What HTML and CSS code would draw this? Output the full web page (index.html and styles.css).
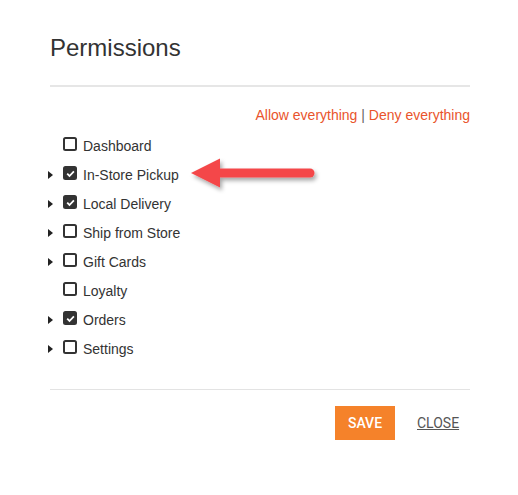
FILE: index.html
```html
<!DOCTYPE html>
<html>
<head>
<meta charset="utf-8">
<link rel="stylesheet" href="styles.css">
</head>
<body>
<div class="modal">
  <h1 class="title">Permissions</h1>
  <hr class="rule-top">
  <div class="bulk"><a class="lnk">Allow everything</a> <span class="sep">|</span> <a class="lnk">Deny everything</a></div>
  <ul class="perms">
    <li class="row"><span class="caret none"></span><span class="box"></span><span class="lbl">Dashboard</span></li>
    <li class="row"><span class="caret"></span><span class="box on"><svg viewBox="0 0 13 13" width="13" height="13"><path d="M3.2 6.7 L5.5 9 L9.9 4.4" fill="none" stroke="#fff" stroke-width="1.8"/></svg></span><span class="lbl">In-Store Pickup</span></li>
    <li class="row"><span class="caret"></span><span class="box on"><svg viewBox="0 0 13 13" width="13" height="13"><path d="M3.2 6.7 L5.5 9 L9.9 4.4" fill="none" stroke="#fff" stroke-width="1.8"/></svg></span><span class="lbl">Local Delivery</span></li>
    <li class="row"><span class="caret"></span><span class="box"></span><span class="lbl">Ship from Store</span></li>
    <li class="row"><span class="caret"></span><span class="box"></span><span class="lbl">Gift Cards</span></li>
    <li class="row"><span class="caret none"></span><span class="box"></span><span class="lbl">Loyalty</span></li>
    <li class="row"><span class="caret"></span><span class="box on"><svg viewBox="0 0 13 13" width="13" height="13"><path d="M3.2 6.7 L5.5 9 L9.9 4.4" fill="none" stroke="#fff" stroke-width="1.8"/></svg></span><span class="lbl">Orders</span></li>
    <li class="row"><span class="caret"></span><span class="box"></span><span class="lbl">Settings</span></li>
  </ul>
  <hr class="rule-bottom">
  <div class="actions">
    <button class="save">SAVE</button>
    <a class="close">CLOSE</a>
  </div>
  <svg class="arrow" width="140" height="50" viewBox="0 0 140 50">
    <defs>
      <filter id="sh" x="-20%" y="-50%" width="140%" height="200%">
        <feDropShadow dx="2" dy="3" stdDeviation="2" flood-color="#000" flood-opacity="0.35"/>
      </filter>
    </defs>
    <g filter="url(#sh)">
      <path d="M35 19.5 L125 19.5 A4.5 4.5 0 0 1 125 28.5 L35 28.5 Z" fill="#f4474a"/>
      <path d="M6 24 L35 9.5 L35 38.5 Z" fill="#f4474a"/>
    </g>
  </svg>
</div>
</body>
</html>
```

FILE: styles.css
```css
html, body {
  margin: 0;
  padding: 0;
  background: #fff;
}
body {
  font-family: "Liberation Sans", Arial, sans-serif;
  color: #333;
  width: 518px;
  height: 495px;
  overflow: hidden;
}
.modal {
  position: relative;
  width: 420px;
  margin-left: 50px;
  padding-top: 34px;
}
.title {
  margin: 0;
  font-size: 24px;
  line-height: 28px;
  font-weight: normal;
  color: #333;
}
.rule-top {
  margin: 23px 0 0 0;
  border: 0;
  height: 2px;
  background: #e6e6e6;
}
.bulk {
  margin-top: 20px;
  text-align: right;
  font-size: 14px;
  line-height: 16px;
}
.lnk {
  color: #e9542c;
  cursor: pointer;
}
.sep {
  color: #666;
}
.perms {
  list-style: none;
  margin: 8px 0 0 0;
  padding: 0;
}
.row {
  display: flex;
  align-items: center;
  height: 29px;
  font-size: 14px;
  line-height: 16px;
}
.caret {
  flex: none;
  width: 0;
  height: 0;
  margin-left: -2px;
  border-top: 4px solid transparent;
  border-bottom: 4px solid transparent;
  border-left: 5px solid #222;
  margin-right: 10px;
}
.caret.none {
  border-left-color: transparent;
}
.box {
  flex: none;
  box-sizing: border-box;
  width: 14px;
  height: 14px;
  border: 2px solid #333;
  border-radius: 2.5px;
  margin-bottom: 3px;
  margin-right: 6px;
  display: flex;
  align-items: center;
  justify-content: center;
  overflow: hidden;
}
.box.on {
  background: #333;
  border-color: #333;
}
.box svg {
  display: block;
  flex: none;
}
.lbl {
  color: #333;
}
.rule-bottom {
  margin: 26px 0 0 0;
  border: 0;
  height: 1px;
  background: #e3e3e3;
}
.actions {
  display: flex;
  align-items: center;
  margin-top: 16px;
  padding-left: 285px;
}
.save {
  width: 60px;
  height: 34px;
  border: 0;
  background: #f5822a;
  color: #fff;
  font-family: Roboto, "Liberation Sans", sans-serif;
  font-weight: 500;
  font-size: 14px;
  padding: 0;
}
.close {
  margin-left: 22px;
  font-family: Roboto, "Liberation Sans", sans-serif;
  font-size: 14px;
  color: #555;
  text-decoration: underline;
}
.arrow {
  position: absolute;
  left: 135px;
  top: 149px;
}
```
